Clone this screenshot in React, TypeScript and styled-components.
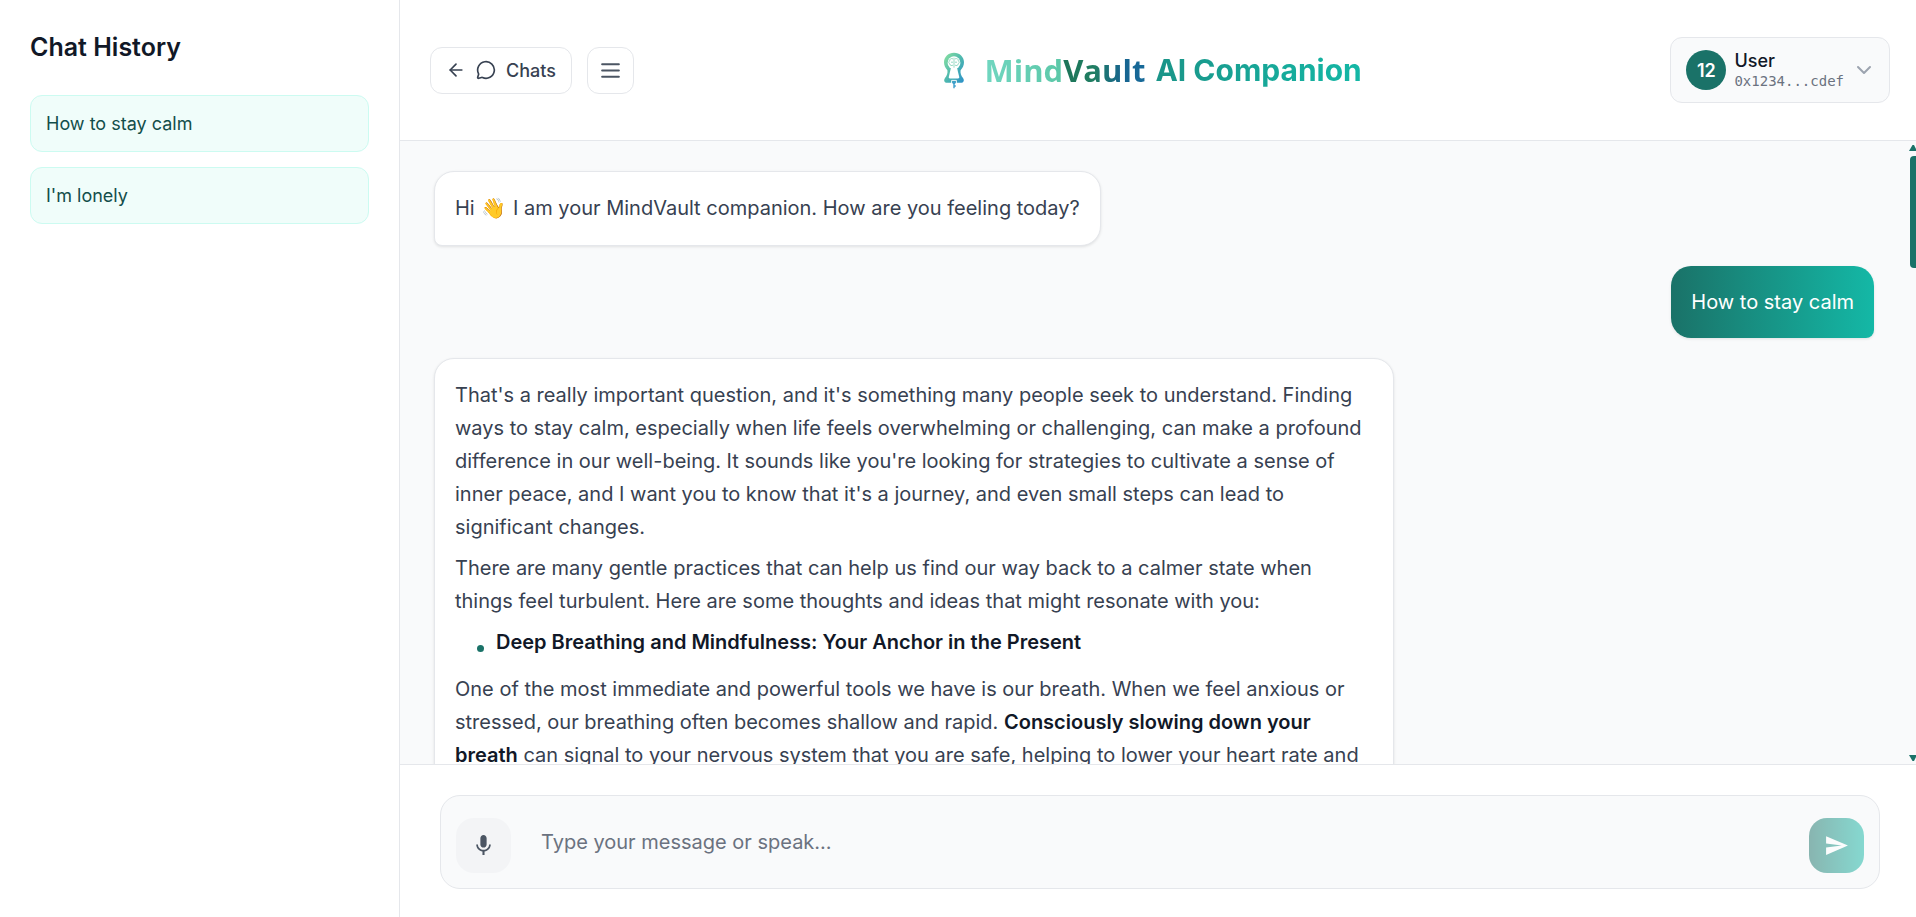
import React from "react";
import styled, { createGlobalStyle } from "styled-components";
import { ArrowLeft, ChevronDown, MessageCircle } from "lucide-react";
import { MdMic, MdSend } from "react-icons/md";

const GlobalStyle = createGlobalStyle`
  * { box-sizing: border-box; }
  body { margin: 0; background: #fff; font-family: Inter, "Liberation Sans", sans-serif; color: #374151; }
  button, textarea { font: inherit; color: inherit; }
  h1, h2, p, ul { margin: 0; padding: 0; }
`;

const Page = styled.div`
  display: grid;
  grid-template-columns: 400px minmax(0, 1fr);
  height: 100vh;
  overflow: hidden;
`;

const Sidebar = styled.aside`
  padding: 30px;
  border-right: 1px solid #e5e7eb;
  background: #fff;
`;

const SidebarTitle = styled.h2`
  margin-bottom: 30px;
  font-size: 25px;
  line-height: 35px;
  font-weight: 600;
  color: #111827;
`;

const HistoryList = styled.nav`
  display: flex;
  flex-direction: column;
  gap: 15px;
`;

const HistoryItem = styled.button`
  padding: 15px;
  border: 1px solid #ccfbf1;
  border-radius: 12px;
  background: #f0fdfa;
  font-size: 18px;
  line-height: 25px;
  text-align: left;
  color: #134e4a;
  cursor: pointer;
`;

const Main = styled.main`
  display: flex;
  flex-direction: column;
  min-height: 0;
`;

const Header = styled.header`
  display: flex;
  align-items: center;
  justify-content: space-between;
  padding: 37px 26px 37px 30px;
  border-bottom: 1px solid #e5e7eb;
  background: #fff;
`;

const HeaderActions = styled.div`
  display: flex;
  gap: 15px;
`;

const HeaderButton = styled.button`
  display: flex;
  align-items: center;
  gap: 10px;
  height: 47px;
  padding: 0 ${(p: { $square?: boolean }) => (p.$square ? "10px" : "15px")};
  border: 1px solid #e5e7eb;
  border-radius: 12px;
  background: #fff;
  font-size: 18px;
  font-weight: 500;
  cursor: pointer;
`;

const Brand = styled.h1`
  display: flex;
  align-items: center;
  font-size: 30px;
  line-height: 40px;
  font-weight: 700;
`;

const LogoMark = styled.svg`
  width: 22px;
  height: 37px;
  margin-right: 20px;
`;

const Wordmark = styled.span`
  margin-right: 10px;
  font-family: "Open Sans", Inter, sans-serif;
  font-size: 31px;
  background: linear-gradient(90deg, #70d6c0 0%, #5cc8a8 48%, #1c7458 49%, #207e62 68%, #17648f 86%, #176a9a 100%);
  background-clip: text;
  color: transparent;
`;

const BrandSuffix = styled.span`
  background: linear-gradient(90deg, #1a9488, #14b8a6);
  background-clip: text;
  color: transparent;
`;

const UserCard = styled.button`
  display: flex;
  align-items: center;
  gap: 8px;
  padding: 12px 13px 12px 15px;
  border: 1px solid #e5e7eb;
  border-radius: 12px;
  background: #f9fafb;
  text-align: left;
  cursor: pointer;
`;

const Avatar = styled.span`
  display: grid;
  place-items: center;
  width: 40px;
  height: 40px;
  border-radius: 50%;
  background: #1a7268;
  font-size: 18px;
  font-weight: 600;
  color: #fff;
`;

const UserText = styled.span`
  display: flex;
  flex-direction: column;
`;

const UserName = styled.span`
  font-size: 18px;
  line-height: 22px;
  font-weight: 500;
  color: #111827;
`;

const UserAddress = styled.span`
  font-family: "DejaVu Sans Mono", monospace;
  font-size: 14px;
  line-height: 18px;
  color: #6b7280;
`;

const Conversation = styled.section`
  display: grid;
  grid-template-columns: minmax(0, 1fr) 8px;
  flex: 1;
  min-height: 0;
  background: #f9fafb;
`;

const MessageList = styled.div`
  display: flex;
  flex-direction: column;
  align-items: flex-start;
  gap: 20px;
  min-height: 0;
  overflow-y: auto;
  scrollbar-width: none;
  padding: 30px 34px;
`;

const Bubble = styled.article`
  display: flex;
  flex-direction: column;
  flex-shrink: 0;
  gap: 8px;
  max-width: 960px;
  padding: 20px;
  border: 1px solid #e5e7eb;
  border-radius: 20px 20px 20px 8px;
  background: #fff;
  box-shadow: 0 1px 3px rgba(0, 0, 0, 0.1);
  font-size: 20px;
  line-height: 33px;
  strong { font-weight: 600; color: #111827; }
`;

const OwnBubble = styled(Bubble)`
  align-self: flex-end;
  border: 0;
  border-radius: 20px 20px 8px 20px;
  background: linear-gradient(90deg, #1a7268, #14b8a6);
  line-height: 32px;
  color: #fff;
`;

const Emoji = styled.span`
  margin: 0 1px;
`;

const Points = styled.ul`
  padding-bottom: 6px;
  list-style: none;
`;

const Point = styled.li`
  display: flex;
  align-items: center;
  gap: 12px;
  padding-left: 22px;
  &::before {
    content: "";
    width: 7px;
    height: 7px;
    margin-top: 12px;
    border-radius: 50%;
    background: #1a7268;
  }
`;

const Rail = styled.div`
  display: flex;
  flex-direction: column;
  align-items: flex-end;
  padding: 4px 0 3px;
`;

const Thumb = styled.div`
  width: 6px;
  height: 112px;
  margin: 5px 0 auto;
  border-radius: 4px 0 0 4px;
  background: #1a7268;
`;

const Composer = styled.form`
  padding: 30px 36px 28px 40px;
  border-top: 1px solid #e5e7eb;
  background: #fff;
`;

const ComposerBox = styled.div`
  display: flex;
  align-items: flex-end;
  gap: 15px;
  padding: 15px;
  border: 1px solid #e5e7eb;
  border-radius: 20px;
  background: #f9fafb;
`;

const ComposerButton = styled.button`
  display: grid;
  place-items: center;
  width: 55px;
  height: 55px;
  padding: 0;
  border: 0;
  border-radius: 18px;
  background: #f3f4f6;
  color: #4b5563;
  cursor: pointer;
`;

const SendButton = styled(ComposerButton)`
  background: linear-gradient(90deg, #1a7268, #14b8a6);
  color: #fff;
  opacity: 0.5;
`;

const MessageInput = styled.textarea`
  flex: 1;
  height: 62px;
  padding: 15px;
  border: 0;
  outline: 0;
  background: transparent;
  resize: none;
  font-size: 20px;
  line-height: 32px;
  &::placeholder { color: #6b7280; }
`;

function Logo() {
  return (
    <LogoMark viewBox="0 0 22 37" aria-hidden="true">
      <defs>
        <linearGradient id="keyhole" x1="0" y1="0" x2="1" y2="1">
          <stop offset="0" stopColor="#8be3a0" />
          <stop offset="0.5" stopColor="#4fb9ae" />
          <stop offset="1" stopColor="#2a8fc9" />
        </linearGradient>
      </defs>
      <path fill="url(#keyhole)" d="M11 .8C5.300.8 1 5 1 10.300c0 3.300 1.500 5.900 3.400 7.900.5 2.800-.5 5.300-2.400 7.800-1.700 2.600-.6 4.800 2.200 4.800h13.600c2.800 0 3.900-2.200 2.200-4.800-1.900-2.500-2.900-5-2.400-7.800 1.900-2 3.400-4.600 3.400-7.900C21 5 16.700.8 11 .8z" />
      <circle cx="11" cy="10.700" r="6.400" fill="#fff" />
      <path fill="#fff" d="M8.200 15h5.600l2.400 9.800c.3 1.300-.2 1.700-1.200 1.700H7c-1 0-1.500-.4-1.200-1.700z" />
      <path fill="none" stroke="#7fd0b6" strokeWidth="0.800" d="M11 5.700v10M10 6.900c-2-1-3.600.4-3.200 1.800-1.400.6-1.400 2.600 0 3.200 0 1.600 2 2.200 3.200 1.200M12 6.900c2-1 3.600.4 3.200 1.800 1.400.6 1.400 2.600 0 3.200 0 1.600-2 2.200-3.200 1.200M8 10.200h2M12 10.200h2" />
      <path fill="none" stroke="#fff" strokeWidth="0.900" d="M8.600 31v-2.600h4.800V31" />
      <path fill="none" stroke="#3f9fcb" strokeWidth="1.400" d="M11 30v6.200M11 34h1.800" />
      <circle cx="11" cy="30.600" r="1.700" fill="#3f9fcb" />
    </LogoMark>
  );
}

function MenuIcon() {
  return (
    <svg width="25" height="25" viewBox="0 0 24 24" fill="none" stroke="#4b5563" strokeWidth="2" strokeLinecap="round" aria-hidden="true">
      <path d="M4 6h16M4 12h16M4 18h16" />
    </svg>
  );
}

function ScrollArrow({ down }: { down?: boolean }) {
  return (
    <svg width="7" height="6" viewBox="0 0 7 6" fill="#1a7268" aria-hidden="true">
      <path d={down ? "M0 0H7V2L5 6H3.500Z" : "M0 6H7V4L5 0H3.500Z"} />
    </svg>
  );
}

export default function App() {
  return (
    <Page>
      <GlobalStyle />
      <Sidebar>
        <SidebarTitle>Chat History</SidebarTitle>
        <HistoryList aria-label="Chat history">
          <HistoryItem type="button">How to stay calm</HistoryItem>
          <HistoryItem type="button">I'm lonely</HistoryItem>
        </HistoryList>
      </Sidebar>
      <Main>
        <Header>
          <HeaderActions>
            <HeaderButton type="button">
              <ArrowLeft size={20} />
              <MessageCircle size={20} />
              Chats
            </HeaderButton>
            <HeaderButton type="button" $square aria-label="Menu">
              <MenuIcon />
            </HeaderButton>
          </HeaderActions>
          <Brand>
            <Logo />
            <Wordmark>MindVault</Wordmark>
            <BrandSuffix>AI Companion</BrandSuffix>
          </Brand>
          <UserCard type="button">
            <Avatar>12</Avatar>
            <UserText>
              <UserName>User</UserName>
              <UserAddress>0x1234...cdef</UserAddress>
            </UserText>
            <ChevronDown size={24} color="#9ca3af" />
          </UserCard>
        </Header>
        <Conversation>
          <MessageList>
            <Bubble>
              <p>
                Hi <Emoji>👋</Emoji> I am your MindVault companion. How are you feeling today?
              </p>
            </Bubble>
            <OwnBubble>
              <p>How to stay calm</p>
            </OwnBubble>
            <Bubble>
              <p>
                That's a really important question, and it's something many people seek to understand. Finding ways to
                stay calm, especially when life feels overwhelming or challenging, can make a profound difference in our
                well-being. It sounds like you're looking for strategies to cultivate a sense of inner peace, and I want
                you to know that it's a journey, and even small steps can lead to significant changes.
              </p>
              <p>
                There are many gentle practices that can help us find our way back to a calmer state when things feel
                turbulent. Here are some thoughts and ideas that might resonate with you:
              </p>
              <Points>
                <Point>
                  <strong>Deep Breathing and Mindfulness: Your Anchor in the Present</strong>
                </Point>
              </Points>
              <p>
                One of the most immediate and powerful tools we have is our breath. When we feel anxious or stressed, our
                breathing often becomes shallow and rapid. <strong>Consciously slowing down your breath</strong> can
                signal to your nervous system that you are safe, helping to lower your heart rate and
              </p>
            </Bubble>
          </MessageList>
          <Rail aria-hidden="true">
            <ScrollArrow />
            <Thumb />
            <ScrollArrow down />
          </Rail>
        </Conversation>
        <Composer onSubmit={(e) => e.preventDefault()}>
          <ComposerBox>
            <ComposerButton type="button" aria-label="Speak">
              <MdMic size={25} />
            </ComposerButton>
            <MessageInput aria-label="Message" placeholder="Type your message or speak..." />
            <SendButton type="submit" aria-label="Send">
              <MdSend size={25} />
            </SendButton>
          </ComposerBox>
        </Composer>
      </Main>
    </Page>
  );
}
